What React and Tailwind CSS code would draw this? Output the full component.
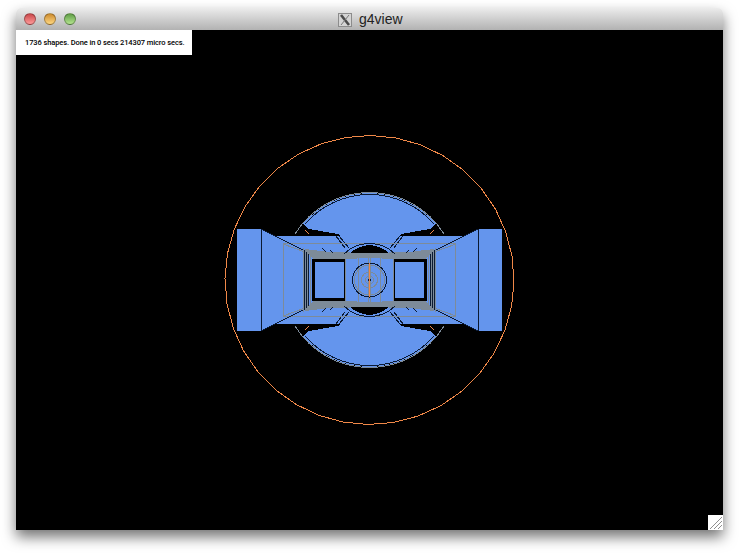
const BLUE = '#6495ed';
const GREY = '#7d8b99';
const DARK = '#0b1a33';
const ORANGE = '#f08848';

// the envelope is a coarse polygon in the reference, not a true circle
const envelope = Array.from({ length: 36 }, (_, i) => {
  const a = ((i * 10 + 0.5) * Math.PI) / 180;
  return `${(369.5 + 144.5 * Math.cos(a)).toFixed(1)},${(280 + 144.5 * Math.sin(a)).toFixed(1)}`;
}).join(' ');

// one quarter of the detector, mirrored for the other three
function Quarter() {
  return (
    <g fill="none">
      {/* dome rims */}
      <path d="M295 234 A87.5 87.5 0 0 1 369.5 192.5" stroke={GREY} />
      <path d="M305 224 A85.5 85.5 0 0 1 369.5 194.5" stroke={DARK} />
      <path d="M305 230 L309 234" stroke={ORANGE} />
      {/* strut beside the dome */}
      <path d="M339 236 L349 248 M336 236 L345 248" stroke={DARK} />
      {/* grey housing */}
      <path d="M283 243.5 H369.5 M283.5 243 V280 M283 244 L305 252" stroke={GREY} />
      <path d="M261 229 L305 251 L313 256" stroke={DARK} />
      <path d="M261 229 V280" stroke={DARK} />
      {/* stacked walls left of the window */}
      <path d="M303.5 248 V280 M305.5 250 V280 M307.5 250 V280 M310.5 253 V280" stroke={GREY} />
      <path d="M304.5 250 V280 M306.5 251 V280 M308.5 252 V280" stroke={DARK} />
      <rect x="312" y="259" width="33" height="3" fill="#000" />
      <rect x="312" y="259" width="3" height="21" fill="#000" />
      <rect x="344" y="259" width="1" height="21" fill="#000" />
      {/* grey struts */}
      <path d="M305 249 L330 252 L369.5 253 V258 L345 259 L314 259 L306 252 Z" fill={GREY} />
      <path d="M322 248 L326 252 M330 250 L333 253" stroke={DARK} />
      {/* lens above the core */}
      <path d="M350 253 A35 35 0 0 1 369.5 245 V253 Z" fill="#000" />
      <path d="M344 254 A36 36 0 0 1 369.5 243.5" stroke={DARK} />
      <path d="M345.5 253 V280 M358.5 253 V280 M368.5 253 V280" stroke={GREY} />
    </g>
  );
}

function Detector() {
  return (
    <svg viewBox="16 30 707 500" shapeRendering="crispEdges" className="block w-full h-full">
      <rect x="237" y="229" width="24" height="102" fill={BLUE} />
      <rect x="478" y="229" width="24" height="102" fill={BLUE} />
      <path
        d="M261 229 L275 236 H464 L478 229 V331 L464 324 H275 L261 331 Z"
        fill={BLUE}
      />
      <path
        d="M303 224 A87 87 0 0 1 436 224 L430 229 L401 234 L399 236 H340 L338 234 L309 229 Z"
        fill={BLUE}
      />
      <path
        d="M303 336 A87 87 0 0 0 436 336 L430 331 L401 326 L399 324 H340 L338 326 L309 331 Z"
        fill={BLUE}
      />
      <Quarter />
      <g transform="matrix(-1 0 0 1 739 0)"><Quarter /></g>
      <g transform="matrix(1 0 0 -1 0 560)"><Quarter /></g>
      <g transform="matrix(-1 0 0 -1 739 560)"><Quarter /></g>
      {/* core rings */}
      <circle cx="369.5" cy="280" r="17" fill="none" stroke={DARK} />
      <circle cx="369.5" cy="280" r="15" fill="none" stroke={GREY} />
      <circle cx="369.5" cy="280" r="8" fill="none" stroke={GREY} />
      <circle cx="369.5" cy="280" r="4" fill="none" stroke={GREY} />
      <circle cx="369.5" cy="280" r="1.5" fill={DARK} />
      <path d="M369.5 263 V297" stroke={ORANGE} />
      {/* outer envelope */}
      <polygon points={envelope} fill="none" stroke={ORANGE} />
    </svg>
  );
}

function Light({ color }) {
  return (
    <span
      className={`block w-3 h-3 rounded-full border border-black/30 ${color}`}
    />
  );
}

function XIcon() {
  return (
    <span className="w-[14px] h-[14px] bg-[#d4d4d4] border border-[#8c8c8c]">
      <svg viewBox="0 0 12 12" className="block w-full h-full">
        <path d="M2 1 L10 11" stroke="#4a4a4a" strokeWidth="2.6" fill="none" />
        <path d="M10 1 L2 11" stroke="#777" strokeWidth="1" fill="none" />
      </svg>
    </span>
  );
}

function TitleBar() {
  return (
    <div className="relative h-[22px] flex items-center rounded-t-[5px] bg-gradient-to-b from-[#ececec] to-[#b2b2b2]">
      <div className="flex items-center gap-2 pl-2">
        <Light color="bg-gradient-to-b from-[#c9474b] to-[#ff9a9a]" />
        <Light color="bg-gradient-to-b from-[#cc8b2c] to-[#ffd880]" />
        <Light color="bg-gradient-to-b from-[#5f9e46] to-[#b5e590]" />
      </div>
      <div className="absolute left-[322px] top-[4px] flex items-center gap-[7px]">
        <XIcon />
        <span className="text-[14px] leading-[15px] text-[#222] font-['Liberation_Sans',sans-serif]">
          g4view
        </span>
      </div>
    </div>
  );
}

function ResizeGrip() {
  return (
    <div className="absolute right-0 bottom-0 w-[15px] h-[15px] bg-white">
      <svg viewBox="0 0 15 15" className="w-full h-full">
        <path d="M2 14 L14 2 M6 14 L14 6 M10 14 L14 10" stroke="#8f8f8f" fill="none" />
      </svg>
    </div>
  );
}

export default function App() {
  return (
    <div className="w-[739px] h-[554px] bg-white pt-2 pl-4 font-['Liberation_Sans',sans-serif]">
      <div className="w-[707px] flex flex-col rounded-t-[5px] shadow-[0_7px_14px_rgba(0,0,0,0.55)]">
        <TitleBar />
        <div className="relative h-[500px] bg-black">
          <Detector />
          <div className="absolute left-0 top-0 w-[176px] h-[25px] bg-white flex items-center pl-[9px] text-[7.5px] leading-none font-medium tracking-[-0.1px] text-black whitespace-nowrap font-['Roboto',sans-serif]">
            1736 shapes. Done in 0 secs 214307 micro secs.
          </div>
          <ResizeGrip />
        </div>
      </div>
    </div>
  );
}
